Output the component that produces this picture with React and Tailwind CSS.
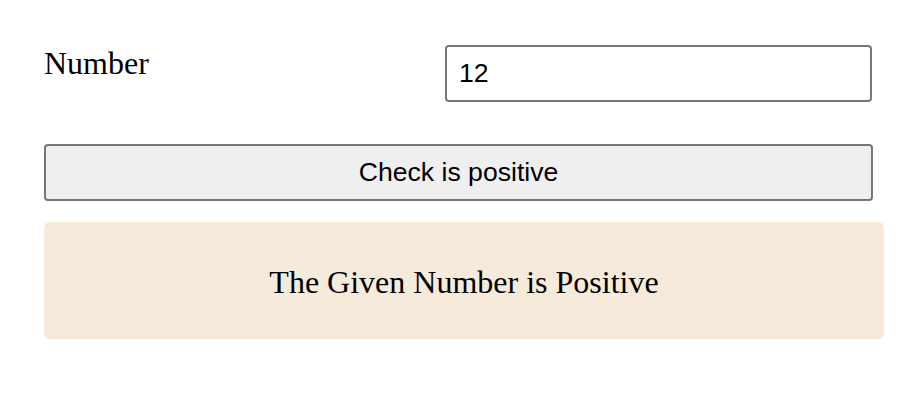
export default function App() {
  return (
    <div className="min-h-screen bg-white pl-[44px] pt-[45px]">
      <div className="w-[829px]">
        <div className="flex items-start justify-between">
          <label className="mt-0 font-['Liberation_Serif',serif] text-[32px] leading-[36px] text-black">
            Number
          </label>
          <input
            defaultValue="12"
            className="mr-[1px] h-[57px] w-[427px] rounded-[4px] border-2 border-[#767676] bg-white px-[12px] font-['Liberation_Sans',Arial,sans-serif] text-[26.6px] text-black outline-none"
          />
        </div>
        <button className="mt-[42px] flex h-[57px] w-[829px] items-center justify-center rounded-[4px] border-2 border-[#767676] bg-[#efefef] font-['Liberation_Sans',Arial,sans-serif] text-[26.6px] text-black">
          Check is positive
        </button>
      </div>
      <div className="mt-[21px] flex h-[117px] w-[840px] items-center justify-center rounded-[6px] bg-[#f6ebda] pt-[2px] font-['Liberation_Serif',serif] text-[32px] text-black">
        The Given Number is Positive
      </div>
    </div>
  );
}
